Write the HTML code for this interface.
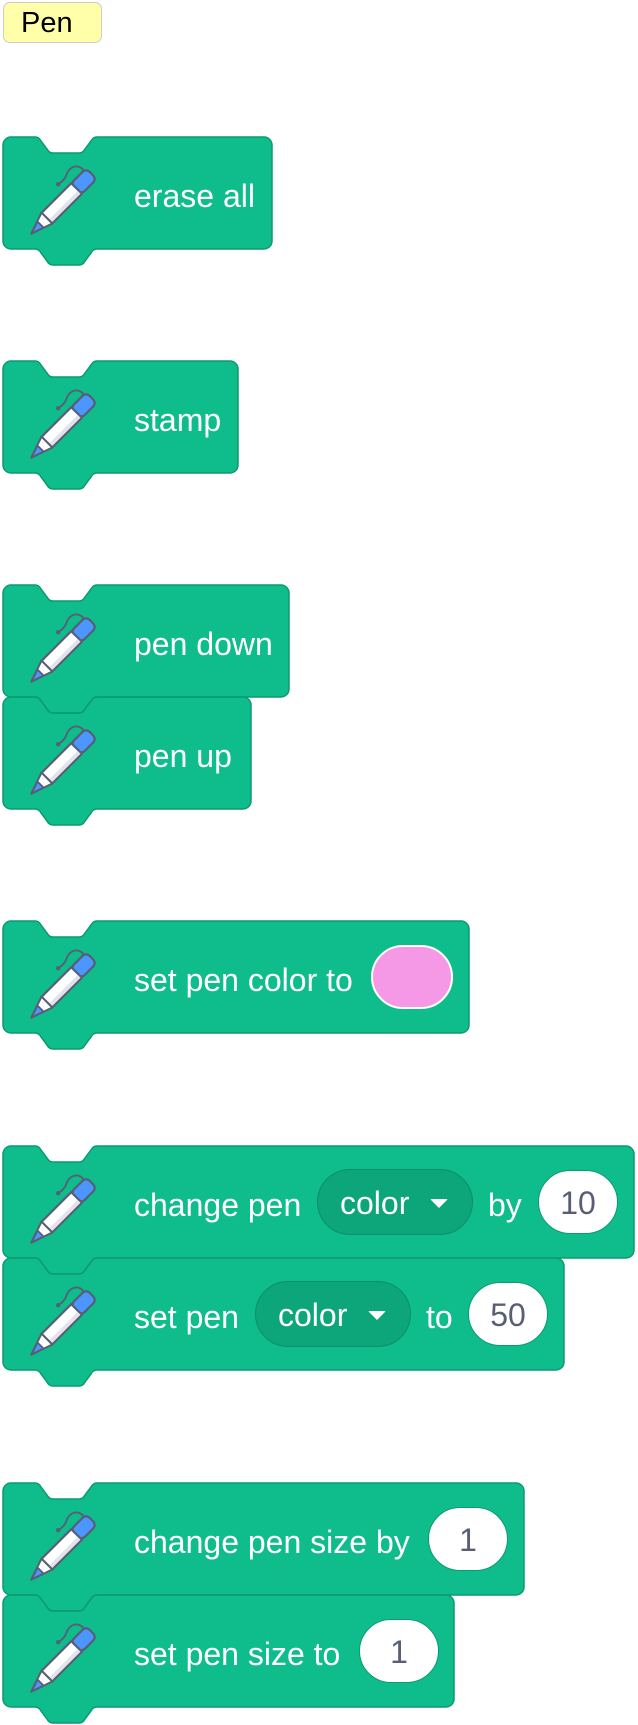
<!DOCTYPE html>
<html><head><meta charset="utf-8"><style>
html,body{margin:0;padding:0;background:#fff;width:638px;height:1724px;overflow:hidden;font-family:"Liberation Sans",Arial,sans-serif}
.lbl{position:absolute;left:3px;top:2px;width:99px;height:41px;background:#ffffaa;border:1px solid #ccc;border-radius:7px;box-sizing:border-box;font-size:29px;line-height:40px;padding-left:17px;color:#000}
.b{position:absolute;left:3px;height:112px}
.b>svg.s{position:absolute;left:0;top:0;overflow:visible}
.ic{position:absolute;left:0;top:0;width:100px;height:112px}
.t{position:absolute;top:3px;height:112px;line-height:112px;color:#fff;font-size:32px;white-space:nowrap}
.num{position:absolute;top:24px;height:64px;border-radius:32px;background:#fff;border:1px solid #0b9a72;box-sizing:border-box;color:#575e75;font-size:32px;line-height:64px;text-align:center}
.dd{position:absolute;top:23px;height:66px;border-radius:33px;background:#0da57a;border:1.5px solid #0b8f6a;box-sizing:border-box;color:#fff;font-size:32px;line-height:66px;padding-left:22px}
.dd i{position:absolute;right:24px;top:29px;width:0;height:0;border-left:9px solid transparent;border-right:9px solid transparent;border-top:9px solid #fff;border-radius:2px}
.pink{position:absolute;top:24px;height:64px;border-radius:32px;background:#f598e6;border:2px solid #fff;box-sizing:border-box}
</style></head><body>
<svg width="0" height="0" style="position:absolute">
<defs>
<g id="pen">
<g transform="translate(58,67) rotate(45)">
<path d="M-4,-39 c-12,-4 -17,6 -13,14 c2,4 2,9 1,13" fill="none" stroke="#575e75" stroke-width="1.8"/>
<circle cx="-16" cy="-12" r="2.2" fill="#575e75"/>
<rect x="-7.5" y="-43" width="15" height="22" rx="5" fill="#4c97ff" stroke="#575e75" stroke-width="2.2"/>
<path d="M-7.5,-22 h15 v42 h-15 z" fill="#fff" stroke="#575e75" stroke-width="2.2"/>
<path d="M2.5,-21 h4 v40 h-4 z" fill="#e3e4ea"/>
<path d="M-7.5,20 h15 L0,42 Z" fill="#4c97ff" stroke="#575e75" stroke-width="2.2" stroke-linejoin="round"/>
<path d="M-7.5,20 h15 L4.5,29 h-9 Z" fill="#fff" stroke="#575e75" stroke-width="1.8" stroke-linejoin="round"/>
</g>
</g>
<path id="shp" d="M0,0"/>
</defs>
</svg>

<div class="lbl">Pen</div>

<!-- erase all -->
<div class="b" style="top:137px;width:269px">
<svg class="s" width="271" height="130"><path d="M0,8 A8,8 0 0 1 8,0 H32 c3,0 5,2 6,4 l6,8 c1,2 3,4 6,4 h26 c3,0 5,-2 6,-4 l6,-8 c1,-2 3,-4 6,-4 H261 a8,8 0 0 1 8,8 V104 a8,8 0 0 1 -8,8 H94 c-3,0 -5,2 -6,4 l-6,8 c-1,2 -3,4 -6,4 h-26 c-3,0 -5,-2 -6,-4 l-6,-8 c-1,-2 -3,-4 -6,-4 H8 a8,8 0 0 1 -8,-8 Z" fill="#0fbd8c" stroke="#0b9a72" stroke-width="1.5"/></svg>
<svg class="ic" viewBox="0 0 100 112"><use href="#pen"/></svg>
<div class="t" style="left:131px">erase all</div>
</div>

<!-- stamp -->
<div class="b" style="top:361px;width:235px">
<svg class="s" width="237" height="130"><path d="M0,8 A8,8 0 0 1 8,0 H32 c3,0 5,2 6,4 l6,8 c1,2 3,4 6,4 h26 c3,0 5,-2 6,-4 l6,-8 c1,-2 3,-4 6,-4 H227 a8,8 0 0 1 8,8 V104 a8,8 0 0 1 -8,8 H94 c-3,0 -5,2 -6,4 l-6,8 c-1,2 -3,4 -6,4 h-26 c-3,0 -5,-2 -6,-4 l-6,-8 c-1,-2 -3,-4 -6,-4 H8 a8,8 0 0 1 -8,-8 Z" fill="#0fbd8c" stroke="#0b9a72" stroke-width="1.5"/></svg>
<svg class="ic" viewBox="0 0 100 112"><use href="#pen"/></svg>
<div class="t" style="left:131px">stamp</div>
</div>

<!-- pen down -->
<div class="b" style="top:585px;width:286px">
<svg class="s" width="288" height="130"><path d="M0,8 A8,8 0 0 1 8,0 H32 c3,0 5,2 6,4 l6,8 c1,2 3,4 6,4 h26 c3,0 5,-2 6,-4 l6,-8 c1,-2 3,-4 6,-4 H278 a8,8 0 0 1 8,8 V104 a8,8 0 0 1 -8,8 H94 c-3,0 -5,2 -6,4 l-6,8 c-1,2 -3,4 -6,4 h-26 c-3,0 -5,-2 -6,-4 l-6,-8 c-1,-2 -3,-4 -6,-4 H8 a8,8 0 0 1 -8,-8 Z" fill="#0fbd8c" stroke="#0b9a72" stroke-width="1.5"/></svg>
<svg class="ic" viewBox="0 0 100 112"><use href="#pen"/></svg>
<div class="t" style="left:131px">pen down</div>
</div>

<!-- pen up -->
<div class="b" style="top:697px;width:248px">
<svg class="s" width="250" height="130"><path d="M0,8 A8,8 0 0 1 8,0 H32 c3,0 5,2 6,4 l6,8 c1,2 3,4 6,4 h26 c3,0 5,-2 6,-4 l6,-8 c1,-2 3,-4 6,-4 H240 a8,8 0 0 1 8,8 V104 a8,8 0 0 1 -8,8 H94 c-3,0 -5,2 -6,4 l-6,8 c-1,2 -3,4 -6,4 h-26 c-3,0 -5,-2 -6,-4 l-6,-8 c-1,-2 -3,-4 -6,-4 H8 a8,8 0 0 1 -8,-8 Z" fill="#0fbd8c" stroke="#0b9a72" stroke-width="1.5"/></svg>
<svg class="ic" viewBox="0 0 100 112"><use href="#pen"/></svg>
<div class="t" style="left:131px">pen up</div>
</div>

<!-- set pen color to -->
<div class="b" style="top:921px;width:466px">
<svg class="s" width="468" height="130"><path d="M0,8 A8,8 0 0 1 8,0 H32 c3,0 5,2 6,4 l6,8 c1,2 3,4 6,4 h26 c3,0 5,-2 6,-4 l6,-8 c1,-2 3,-4 6,-4 H458 a8,8 0 0 1 8,8 V104 a8,8 0 0 1 -8,8 H94 c-3,0 -5,2 -6,4 l-6,8 c-1,2 -3,4 -6,4 h-26 c-3,0 -5,-2 -6,-4 l-6,-8 c-1,-2 -3,-4 -6,-4 H8 a8,8 0 0 1 -8,-8 Z" fill="#0fbd8c" stroke="#0b9a72" stroke-width="1.5"/></svg>
<svg class="ic" viewBox="0 0 100 112"><use href="#pen"/></svg>
<div class="t" style="left:131px">set pen color to</div>
<div class="pink" style="left:368px;width:82px"></div>
</div>

<!-- change pen color by 10 -->
<div class="b" style="top:1146px;width:631px">
<svg class="s" width="633" height="130"><path d="M0,8 A8,8 0 0 1 8,0 H32 c3,0 5,2 6,4 l6,8 c1,2 3,4 6,4 h26 c3,0 5,-2 6,-4 l6,-8 c1,-2 3,-4 6,-4 H623 a8,8 0 0 1 8,8 V104 a8,8 0 0 1 -8,8 H94 c-3,0 -5,2 -6,4 l-6,8 c-1,2 -3,4 -6,4 h-26 c-3,0 -5,-2 -6,-4 l-6,-8 c-1,-2 -3,-4 -6,-4 H8 a8,8 0 0 1 -8,-8 Z" fill="#0fbd8c" stroke="#0b9a72" stroke-width="1.5"/></svg>
<svg class="ic" viewBox="0 0 100 112"><use href="#pen"/></svg>
<div class="t" style="left:131px">change pen</div>
<div class="dd" style="left:314px;width:156px">color<i></i></div>
<div class="t" style="left:485px">by</div>
<div class="num" style="left:535px;width:80px">10</div>
</div>

<!-- set pen color to 50 -->
<div class="b" style="top:1258px;width:561px">
<svg class="s" width="563" height="130"><path d="M0,8 A8,8 0 0 1 8,0 H32 c3,0 5,2 6,4 l6,8 c1,2 3,4 6,4 h26 c3,0 5,-2 6,-4 l6,-8 c1,-2 3,-4 6,-4 H553 a8,8 0 0 1 8,8 V104 a8,8 0 0 1 -8,8 H94 c-3,0 -5,2 -6,4 l-6,8 c-1,2 -3,4 -6,4 h-26 c-3,0 -5,-2 -6,-4 l-6,-8 c-1,-2 -3,-4 -6,-4 H8 a8,8 0 0 1 -8,-8 Z" fill="#0fbd8c" stroke="#0b9a72" stroke-width="1.5"/></svg>
<svg class="ic" viewBox="0 0 100 112"><use href="#pen"/></svg>
<div class="t" style="left:131px">set pen</div>
<div class="dd" style="left:252px;width:156px">color<i></i></div>
<div class="t" style="left:423px">to</div>
<div class="num" style="left:465px;width:80px">50</div>
</div>

<!-- change pen size by 1 -->
<div class="b" style="top:1483px;width:521px">
<svg class="s" width="523" height="130"><path d="M0,8 A8,8 0 0 1 8,0 H32 c3,0 5,2 6,4 l6,8 c1,2 3,4 6,4 h26 c3,0 5,-2 6,-4 l6,-8 c1,-2 3,-4 6,-4 H513 a8,8 0 0 1 8,8 V104 a8,8 0 0 1 -8,8 H94 c-3,0 -5,2 -6,4 l-6,8 c-1,2 -3,4 -6,4 h-26 c-3,0 -5,-2 -6,-4 l-6,-8 c-1,-2 -3,-4 -6,-4 H8 a8,8 0 0 1 -8,-8 Z" fill="#0fbd8c" stroke="#0b9a72" stroke-width="1.5"/></svg>
<svg class="ic" viewBox="0 0 100 112"><use href="#pen"/></svg>
<div class="t" style="left:131px">change pen size by</div>
<div class="num" style="left:425px;width:80px">1</div>
</div>

<!-- set pen size to 1 -->
<div class="b" style="top:1595px;width:451px">
<svg class="s" width="453" height="130"><path d="M0,8 A8,8 0 0 1 8,0 H32 c3,0 5,2 6,4 l6,8 c1,2 3,4 6,4 h26 c3,0 5,-2 6,-4 l6,-8 c1,-2 3,-4 6,-4 H443 a8,8 0 0 1 8,8 V104 a8,8 0 0 1 -8,8 H94 c-3,0 -5,2 -6,4 l-6,8 c-1,2 -3,4 -6,4 h-26 c-3,0 -5,-2 -6,-4 l-6,-8 c-1,-2 -3,-4 -6,-4 H8 a8,8 0 0 1 -8,-8 Z" fill="#0fbd8c" stroke="#0b9a72" stroke-width="1.5"/></svg>
<svg class="ic" viewBox="0 0 100 112"><use href="#pen"/></svg>
<div class="t" style="left:131px">set pen size to</div>
<div class="num" style="left:356px;width:80px">1</div>
</div>

</body></html>
